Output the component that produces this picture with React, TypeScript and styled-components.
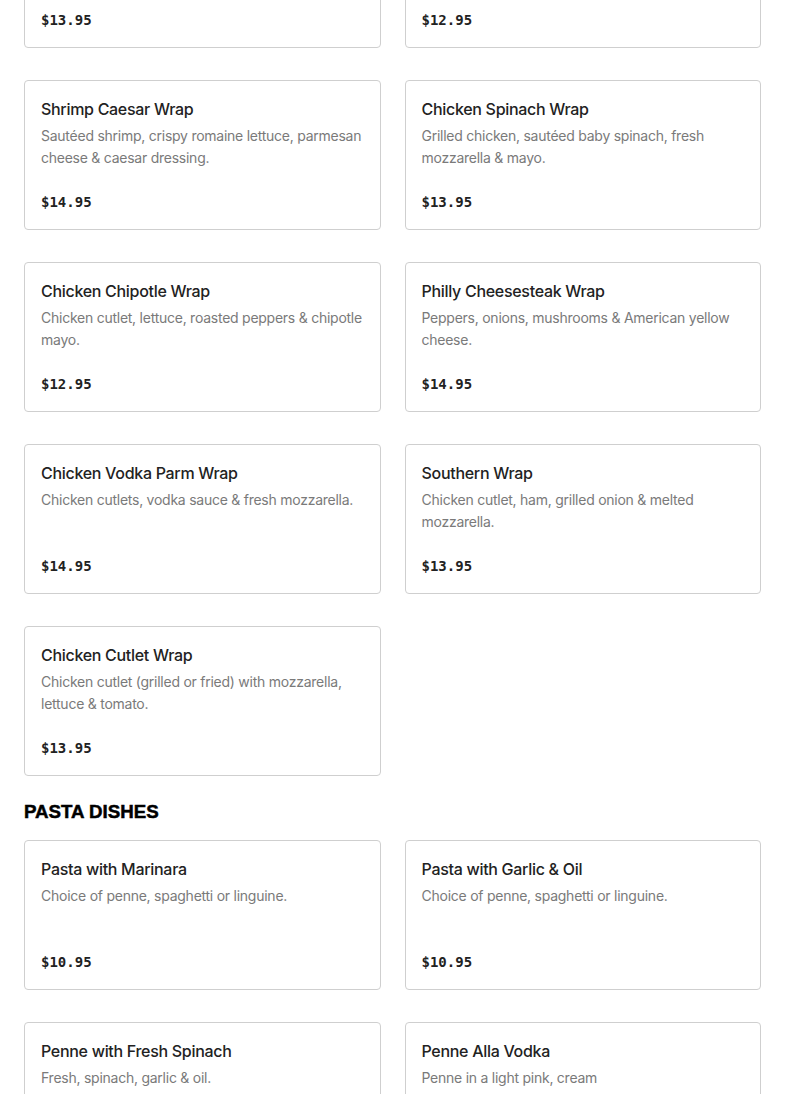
import React from "react";
import styled, { createGlobalStyle } from "styled-components";

const Global = createGlobalStyle`
  html, body { margin: 0; padding: 0; background: #fff; }
  body { font-family: Inter, "Noto Sans", Arial, sans-serif; -webkit-font-smoothing: antialiased; overflow: hidden; }
`;

type Item = { name: string; desc: React.ReactNode; price: string };
type Section = { title?: string; items: Item[] };

const sections: Section[] = [
  {
    items: [
      { name: "Grilled Chicken Wrap", desc: "Grilled chicken, lettuce, tomato & ranch dressing.", price: "$13.95" },
      { name: "Turkey Club Wrap", desc: "Turkey, bacon, lettuce, tomato & mayo.", price: "$12.95" },
      { name: "Shrimp Caesar Wrap", desc: "Sautéed shrimp, crispy romaine lettuce, parmesan cheese & caesar dressing.", price: "$14.95" },
      { name: "Chicken Spinach Wrap", desc: "Grilled chicken, sautéed baby spinach, fresh mozzarella & mayo.", price: "$13.95" },
      { name: "Chicken Chipotle Wrap", desc: "Chicken cutlet, lettuce, roasted peppers & chipotle mayo.", price: "$12.95" },
      { name: "Philly Cheesesteak Wrap", desc: "Peppers, onions, mushrooms & American yellow cheese.", price: "$14.95" },
      { name: "Chicken Vodka Parm Wrap", desc: "Chicken cutlets, vodka sauce & fresh mozzarella.", price: "$14.95" },
      { name: "Southern Wrap", desc: "Chicken cutlet, ham, grilled onion & melted mozzarella.", price: "$13.95" },
      { name: "Chicken Cutlet Wrap", desc: "Chicken cutlet (grilled or fried) with mozzarella, lettuce & tomato.", price: "$13.95" },
    ],
  },
  {
    title: "PASTA DISHES",
    items: [
      { name: "Pasta with Marinara", desc: "Choice of penne, spaghetti or linguine.", price: "$10.95" },
      { name: "Pasta with Garlic & Oil", desc: "Choice of penne, spaghetti or linguine.", price: "$10.95" },
      { name: "Penne with Fresh Spinach", desc: "Fresh, spinach, garlic & oil.", price: "$12.95" },
      { name: "Penne Alla Vodka", desc: <>Penne in a light pink, cream<br />sauce with a touch of vodka.</>, price: "$13.95" },
    ],
  },
];

const Page = styled.main`
  margin-top: -102px;
  padding: 0 24px;
  display: flex;
  flex-direction: column;
  gap: 24px;
`;

const Block = styled.section`
  display: flex;
  flex-direction: column;
  gap: 16px;
`;

const Heading = styled.h2`
  margin: 0;
  font-family: "Liberation Sans", Arial, sans-serif;
  font-weight: 900;
  font-size: 18.7px;
  line-height: 24px;
  color: #000;
  -webkit-text-stroke: 0.5px #000;
`;

const Grid = styled.div`
  display: grid;
  grid-template-columns: 1fr 1fr;
  column-gap: 24px;
  row-gap: 32px;
`;

const Card = styled.article`
  border: 1px solid #cfcfcf;
  border-radius: 4px;
  padding: 16px 16px 17px;
  display: flex;
  flex-direction: column;
  background: #fff;
`;

const Name = styled.h3`
  margin: 0;
  font-family: Inter, "Noto Sans", Arial, sans-serif;
  font-weight: 500;
  font-size: 16px;
  letter-spacing: -0.3px;
  line-height: 24px;
  color: #222;
`;

const Desc = styled.p`
  margin: 4px 0 0;
  min-height: 44px;
  font-family: Inter, "Noto Sans", Arial, sans-serif;
  font-weight: 400;
  font-size: 14px;
  letter-spacing: -0.25px;
  line-height: 22px;
  color: #7a7a7a;
`;

const Price = styled.span`
  margin-top: 23px;
  font-family: "DejaVu Sans Mono", "Liberation Mono", monospace;
  font-weight: 700;
  font-size: 14px;
  line-height: 20px;
  color: #222;
`;

export default function App() {
  return (
    <>
      <Global />
      <Page>
        {sections.map((s, i) => (
          <Block key={i}>
            {s.title && <Heading>{s.title}</Heading>}
            <Grid>
              {s.items.map((it) => (
                <Card key={it.name}>
                  <Name>{it.name}</Name>
                  <Desc>{it.desc}</Desc>
                  <Price>{it.price}</Price>
                </Card>
              ))}
            </Grid>
          </Block>
        ))}
      </Page>
    </>
  );
}
